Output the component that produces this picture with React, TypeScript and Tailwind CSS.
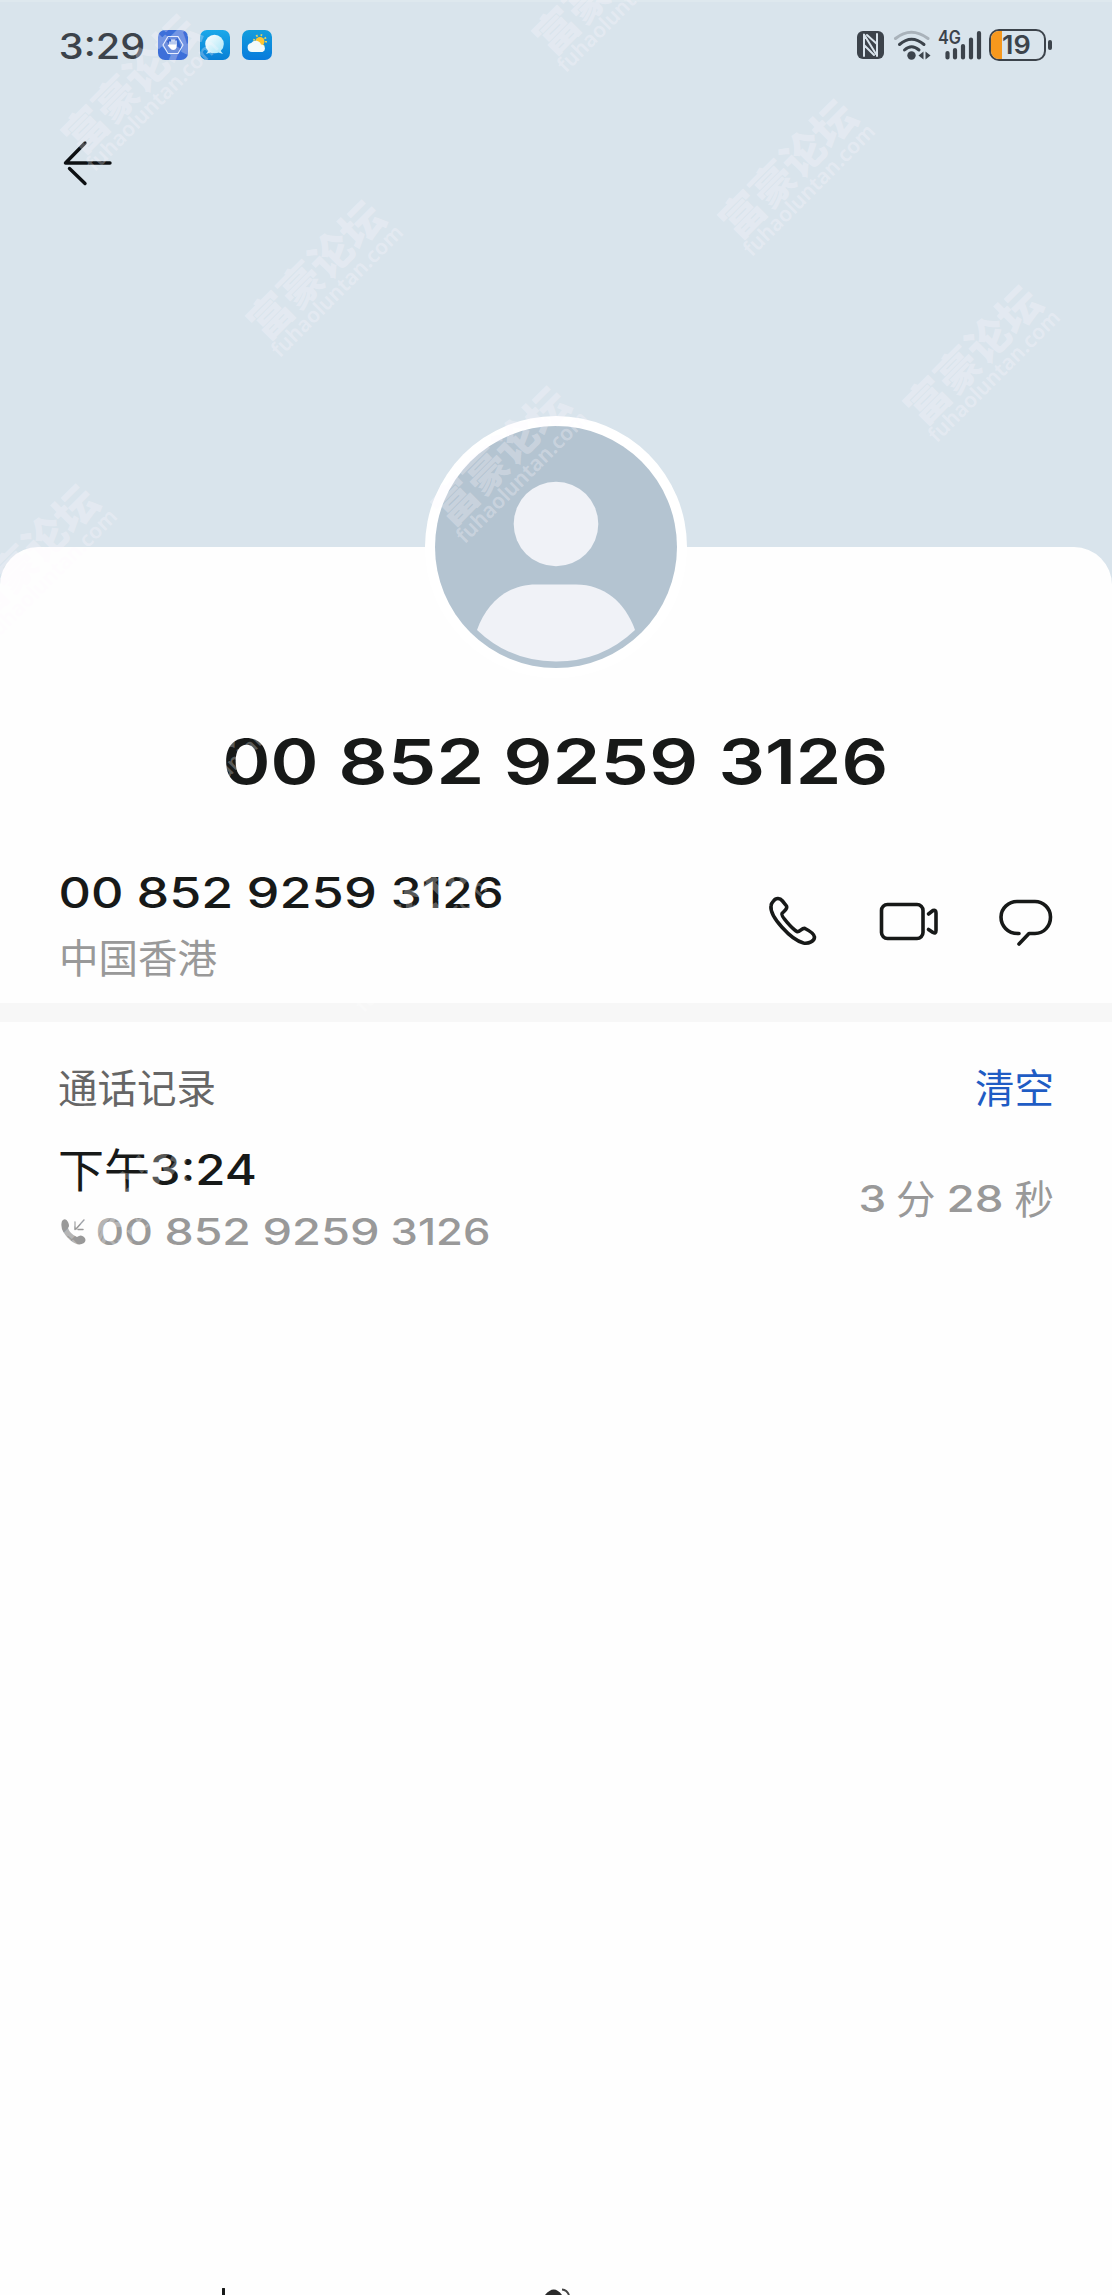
import React, { useLayoutEffect, useRef, useState } from "react";

/* Digits stretched horizontally so that their ink spans exactly `width` px. */
function Wide({ text, width, className = "" }: { text: string; width: number; className?: string }) {
  const ref = useRef<HTMLSpanElement>(null);
  const [fit, setFit] = useState({ scale: 1, left: 0 });
  useLayoutEffect(() => {
    const cs = getComputedStyle(ref.current!);
    const ctx = document.createElement("canvas").getContext("2d")!;
    ctx.font = `${cs.fontWeight} ${cs.fontSize} Inter, sans-serif`;
    const m = ctx.measureText(text);
    const ink = m.actualBoundingBoxLeft + m.actualBoundingBoxRight;
    setFit({ scale: width / ink, left: m.actualBoundingBoxLeft });
  }, [text, width]);
  return (
    <span className="block shrink-0" style={{ width }}>
      <span
        ref={ref}
        className={`block w-max origin-left whitespace-nowrap font-['Inter',sans-serif] leading-none ${className}`}
        style={{ transform: `scaleX(${fit.scale}) translateX(${fit.left}px)` }}
      >
        {text}
      </span>
    </span>
  );
}

function Phone({ widths, gap, className }: { widths: number[]; gap: string; className: string }) {
  return (
    <div className={`flex items-center ${gap}`}>
      {["00", "852", "9259", "3126"].map((g, i) => (
        <Wide key={g} text={g} width={widths[i]} className={className} />
      ))}
    </div>
  );
}

function StatusBar() {
  return (
    <div className="flex h-[90px] items-center pl-[60px] pr-[60px] text-[#3c434b]">
      <div className="flex items-center">
        <Wide text="3:29" width={84} className="mt-[2px] text-[35px] font-medium" />
        <div className="ml-[14px] flex gap-3">
          <svg width="30" height="30" viewBox="0 0 30 30">
            <rect width="30" height="30" rx="7" fill="#3d6fd9" />
            <path d="M10 6.500h10l5 8.500-5 8.500h-10l-5-8.500z" fill="#3465cf" stroke="#dfeaff" strokeWidth="1.100" />
            <path d="M12 15.500v-3.500M14 15v-5M16 15v-5M18 15v-4" stroke="#fff" strokeWidth="1.300" strokeLinecap="round" />
            <path d="M11.400 14.500h7.200v3q-1 2.500-3.500 2.500-2 0-3.200-2l-2.200-2.600.8-.7z" fill="#fff" />
          </svg>
          <svg width="30" height="30" viewBox="0 0 30 30">
            <defs>
              <linearGradient id="chat" x1="0" y1="0" x2="0" y2="1"><stop stopColor="#1aa9ea" /><stop offset="1" stopColor="#087fd5" /></linearGradient>
              <linearGradient id="ball" x1="0" y1="0" x2="1" y2="1"><stop stopColor="#ffffff" /><stop offset="1" stopColor="#a9e6f7" /></linearGradient>
            </defs>
            <rect width="30" height="30" rx="7" fill="url(#chat)" />
            <path d="M9 20l-3 4 6-2zM20 20l3 4-6-2z" fill="#c6effa" />
            <circle cx="14.500" cy="14" r="9.300" fill="url(#ball)" />
          </svg>
          <svg width="30" height="30" viewBox="0 0 30 30">
            <defs>
              <linearGradient id="sky" x1="0" y1="0" x2="0" y2="1"><stop stopColor="#139ddd" /><stop offset="1" stopColor="#087bdc" /></linearGradient>
            </defs>
            <rect width="30" height="30" rx="7" fill="url(#sky)" />
            <circle cx="18" cy="11" r="6" fill="none" stroke="#e3d25c" strokeWidth="2" strokeDasharray="1.600 3.100" />
            <circle cx="18" cy="11.500" r="4.500" fill="#ffc530" />
            <path d="M10 22a4.500 4.500 0 0 1-.8-8.900 5.500 5.500 0 0 1 9.800 1.400 3.900 3.900 0 0 1 1.500 7.500z" fill="#f2fafa" />
          </svg>
        </div>
      </div>
      <div className="ml-auto flex items-center">
        <svg width="27" height="28" viewBox="0 0 27 28">
          <rect width="27" height="28" rx="6" fill="currentColor" />
          <path d="M7 25V3.500L19 23M10 4L20 13M7 14L17 24M20 25V3" fill="none" stroke="#d9e4ec" strokeWidth="2" strokeLinejoin="round" strokeLinecap="round" />
        </svg>
        <svg className="ml-[9px]" width="38" height="30" viewBox="0 0 38 30" fill="none" stroke="currentColor" strokeWidth="3" strokeLinecap="round">
          <path d="M2.500 8.500Q18 -4 35 8.500" stroke="#a9b2ba" />
          <path d="M6.500 14.500Q18.500 4 31 14.500" />
          <path d="M11.500 20Q18.500 13.500 26 20" />
          <circle cx="18.500" cy="25.500" r="4.200" fill="currentColor" stroke="none" />
          <path d="M30.500 21.500v8l-5-4zM32.500 21.500v8l5-4z" fill="currentColor" stroke="none" />
        </svg>
        <div className="relative ml-[7px] h-[30px] w-[44px]">
          <span className="absolute left-0 top-0 origin-left scale-x-90 font-['Inter',sans-serif] text-[18px] font-semibold leading-[16px]">4G</span>
          <svg width="44" height="30" viewBox="0 0 44 30" stroke="currentColor" strokeWidth="4.200" strokeLinecap="round">
            <path d="M9.500 23v4.500M17 20v7.500M25 16v11.500M33 9.500v18M41 3v24.500" />
          </svg>
        </div>
        <div className="relative ml-[7px] flex h-[32px] w-[57px] items-center overflow-hidden rounded-[10px] border-[2.500px] border-[#3c434b] pl-[12px]">
          <div className="absolute inset-y-0 left-0 w-[11px] bg-[#f7981d]" />
          <Wide text="19" width={27} className="text-[26px] font-semibold" />
        </div>
        <div className="ml-[2px] h-[10px] w-[4px] rounded-full bg-[#3c434b]" />
      </div>
    </div>
  );
}

function Header() {
  return (
    <header className="h-[547px] border-t-2 border-[#dee8ee]">
      <div className="-mt-[2px]"><StatusBar /></div>
      <svg className="ml-[60px] mt-[48px]" width="56" height="50" viewBox="60 138 56 50" fill="none" stroke="#0d1013" strokeWidth="3.400" strokeLinecap="round" strokeLinejoin="round">
        <path d="M85 143L65.500 163H110M69.500 168.500L85 183.500" />
      </svg>
    </header>
  );
}

function Avatar() {
  return (
    <svg className="absolute left-[425px] top-[-131px]" width="262" height="262" viewBox="425 416 262 262">
      <circle cx="556" cy="547" r="131" fill="#fff" />
      <circle cx="556" cy="547" r="121" fill="#b4c4d1" />
      <circle cx="556" cy="524" r="42.300" fill="#f0f2f7" />
      <path d="M477 630C487 602 508 584.500 536 584.500H576C604 584.500 625 602 635 630Q602 661.500 556 661.500T477 630Z" fill="#f0f2f7" />
    </svg>
  );
}

function Actions() {
  return (
    <svg className="ml-auto" width="292" height="60" viewBox="764 892 292 60" fill="none" stroke="#171918" strokeWidth="3.600" strokeLinecap="round" strokeLinejoin="round">
      <path d="M772.500 901C775 897.500 779 898 781.500 901L785.500 906C787 909 783 911 781 913.500C779.500 916 791 928 795 931C798 934 800.500 927.500 804 928.500C808 930.500 813 933 813.500 937C813.500 941 808 944 802.500 943C790 940 768.500 916.500 770 906C770.200 904 771 902.500 772.500 901Z" />
      <rect x="880.500" y="904.500" width="41.500" height="34" rx="6" />
      <path d="M927.500 914L932 910.500Q935 909.500 935 913V930.500Q935 934 932 932.500L927.500 929.500" />
      <path d="M1018 933.500C1006 934 1000 925 1000 917C1000 908 1008 901.500 1016 901.500H1034C1042 901.500 1049.500 908 1049.500 917C1049.500 926 1043 933.500 1034 933.500H1028L1018 944" />
    </svg>
  );
}

const cjk = "font-['Noto_Sans_CJK_SC',sans-serif] leading-none whitespace-nowrap";

/* Centres of the diagonal site marks laid over the page. */
const marks: [number, number][] = [
  [131, 84],
  [602, -15],
  [316, 270],
  [788, 169],
  [973, 355],
  [501, 456],
  [30, 554],
  [215, 739],
  [400, 925],
  [114, 1208],
];

function Watermarks() {
  return (
    <div className="pointer-events-none absolute inset-0 overflow-hidden">
      {marks.map(([x, y]) => (
        <div
          key={`${x}-${y}`}
          className={`absolute flex w-[180px] origin-[90px_24px] -translate-x-1/2 -translate-y-[24px] -rotate-45 flex-col items-center ${y > 700 ? "text-white/30" : "text-[#fef8ff]/30"}`}
          style={{ left: x, top: y }}
        >
          <span className={`${cjk} text-[43px] font-black`}>富豪论坛</span>
          <span className="font-['Noto_Sans',sans-serif] text-[21px] font-semibold leading-[21px]">fuhaoluntan.com</span>
        </div>
      ))}
    </div>
  );
}

export default function App() {
  return (
    <div className="relative h-[2295px] w-[1112px] overflow-hidden bg-[#d9e4ec]">
      <Header />
      <main className="relative flex h-[1748px] flex-col rounded-t-[38px] bg-[#fefefe] text-[#171918]">
        <Avatar />
        <h1 className="mt-[184px] pl-[226px]">
          <Phone widths={[89, 138, 188, 163]} gap="gap-[27px]" className="text-[62px] font-semibold" />
        </h1>
        <section className="flex h-[163px] items-start pl-[61px] pr-[55px]">
          <div className="mt-[79px]">
            <Phone widths={[60, 92, 126, 109]} gap="gap-[18px]" className="text-[42px] font-medium" />
            <div className={`${cjk} -ml-[2px] mt-[22px] text-[39.500px] text-[#999]`}>中国香港</div>
          </div>
          <div className="ml-auto mt-[99px]"><Actions /></div>
        </section>
        <div className="mt-[47px] h-[19px] shrink-0 bg-[#f7f7f7]" />
        <section className="pl-[58px] pr-[58px] pt-[44px]">
          <div className={`${cjk} flex justify-between text-[39.500px]`}>
            <h2 className="text-[#666]">通话记录</h2>
            <button className="text-[#1f5cc4]">清空</button>
          </div>
          <div className="mt-[37px] flex items-center justify-between">
            <div>
              <div className="flex items-center">
                <span className={`${cjk} w-[94px] text-[46px]`}>下午</span>
                <Wide text="3:24" width={103} className="mt-[6px] text-[42px] font-medium" />
              </div>
              <div className="mt-[23px] flex items-center pl-[3px] text-[#999]">
                <svg className="mr-[12px]" width="25" height="26" viewBox="0 0 25 26" fill="none" stroke="#999" strokeLinecap="round">
                  <path d="M2 1Q5-1 7 3T7 9Q9 15 16 18Q20 15 23 18T23 24Q17 28 9 21Q-2 11 1 2Z" fill="#999" stroke="none" />
                  <path d="M23 1L15 10M14 3V10.500M17 10.500H22" strokeWidth="1.500" />
                </svg>
                <Phone widths={[53, 82, 112, 95]} gap="gap-[16px]" className="text-[36.500px] font-medium" />
              </div>
            </div>
            <div className="flex items-center text-[#999]">
              <Wide text="3" width={23} className="mt-[5px] text-[36.500px] font-medium" />
              <span className={`${cjk} ml-[12px] text-[39.500px]`}>分</span>
              <span className="ml-[13px]"><Wide text="28" width={52} className="mt-[5px] text-[36.500px] font-medium" /></span>
              <span className={`${cjk} ml-[14px] text-[39.500px]`}>秒</span>
            </div>
          </div>
        </section>
        <svg className="mt-auto" width="1112" height="7" viewBox="0 0 1112 7" fill="none">
          <path d="M223.500 1v6" stroke="#171918" strokeWidth="3" strokeLinecap="round" />
          <path d="M545 7Q554-4 562 7Z" fill="#2b2b2b" />
          <path d="M562 1.500Q567 2 569 7" stroke="#444" strokeWidth="2" />
        </svg>
      </main>
      <Watermarks />
    </div>
  );
}
